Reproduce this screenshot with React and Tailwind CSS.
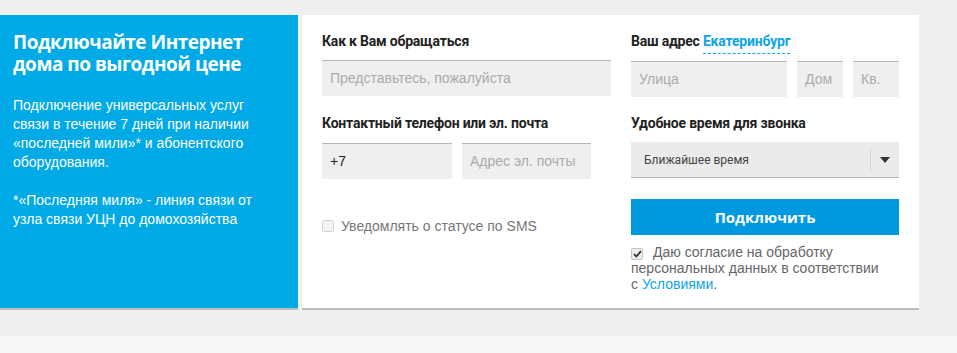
import React from "react";

const label = "text-[14px] font-bold text-[#222] leading-[16px] tracking-[-0.2px]";

export default function App() {
  return (
    <div className="w-[957px] h-[353px] bg-[#efefef] flex flex-col" style={{ fontFamily: '"Liberation Sans", Arial, sans-serif' }}>
      <div className="flex pt-[15px] gap-[4px]">
        {/* Blue panel */}
        <div className="w-[298px] h-[295px] bg-[#00aae6] border-b-2 border-[#bdbdbd] pl-[13px] pt-[16px] text-white">
          <h2 className="text-[19px] font-bold leading-[22px] tracking-[-0.5px]" style={{ fontFamily: '"Open Sans", sans-serif' }}>
            Подключайте Интернет<br />дома по выгодной цене
          </h2>
          <p className="mt-[21px] w-[252px] text-[14px] leading-[19px]">
            Подключение универсальных услуг связи в течение 7 дней при наличии «последней мили»* и абонентского оборудования.
            <br />
            <br />
            *«Последняя миля» - линия связи от узла связи УЦН до домохозяйства
          </p>
        </div>
        {/* White panel */}
        <div className="w-[617px] h-[295px] bg-white border-b-2 border-[#bdbdbd] pl-[20px] pt-[18px] flex gap-[20px]">
          {/* Left column */}
          <div className="w-[289px] flex flex-col">
            <div className={label} style={{ fontFamily: 'Roboto, sans-serif' }}>Как к Вам обращаться</div>
            <div className="mt-[11px] h-[36px] bg-[#efefef] border-t border-[#b5b5b5] flex items-center pl-[8px] text-[14px] text-[#aaaaaa]">
              Представьтесь, пожалуйста
            </div>
            <div className={label + " mt-[19px]"} style={{ fontFamily: 'Roboto, sans-serif' }}>Контактный телефон или эл. почта</div>
            <div className="mt-[12px] flex gap-[10px]">
              <div className="w-[130px] h-[36px] bg-[#efefef] border-t border-[#b5b5b5] flex items-center pl-[8px] text-[14px] text-[#222]">+7</div>
              <div className="w-[129px] h-[36px] bg-[#efefef] border-t border-[#b5b5b5] flex items-center pl-[8px] text-[14px] text-[#aaaaaa]">Адрес эл. почты</div>
            </div>
            <div className="mt-[39px] flex items-center gap-[7px] text-[14px] leading-[16px] text-[#777777]">
              <span className="w-[12px] h-[12px] rounded-[2px] border border-[#d6d6d6] bg-[#f4f4f4]" />
              <span>Уведомлять о статусе по SMS</span>
            </div>
          </div>
          {/* Right column */}
          <div className="w-[268px] flex flex-col">
            <div className={label + " flex"} style={{ fontFamily: 'Roboto, sans-serif' }}>
              <span>Ваш адрес&nbsp;</span>
              <span className="text-[#0ea5e2] border-b border-dashed border-[#0ea5e2] pb-[4px]">Екатеринбург</span>
            </div>
            <div className="mt-[7px] flex gap-[10px]">
              <div className="w-[156px] h-[36px] bg-[#efefef] border-t border-[#b5b5b5] flex items-center pl-[8px] text-[14px] text-[#aaaaaa]">Улица</div>
              <div className="w-[46px] h-[36px] bg-[#efefef] border-t border-[#b5b5b5] flex items-center pl-[8px] text-[14px] text-[#aaaaaa]">Дом</div>
              <div className="w-[46px] h-[36px] bg-[#efefef] border-t border-[#b5b5b5] flex items-center pl-[8px] text-[14px] text-[#aaaaaa]">Кв.</div>
            </div>
            <div className={label + " mt-[18px]"} style={{ fontFamily: 'Roboto, sans-serif' }}>Удобное время для звонка</div>
            <div className="mt-[11px] h-[36px] bg-[#ebebeb] border-b border-[#b5b5b5] flex items-center text-[12px] text-[#444]" style={{ fontFamily: 'Roboto, sans-serif' }}>
              <span className="pl-[13px] flex-1">Ближайшее время</span>
              <span className="w-px h-[24px] bg-[#d4d4d4]" />
              <span className="w-[28px] flex justify-center">
                <svg width="10" height="6" viewBox="0 0 10 6"><path d="M0 0h10L5 6z" fill="#333" /></svg>
              </span>
            </div>
            <button className="mt-[21px] h-[36px] bg-[#0099e0] text-white text-[15px] font-bold flex items-center justify-center" style={{ fontFamily: '"Open Sans", sans-serif' }}>
              Подключить
            </button>
            <div className="mt-[9px] w-[256px] text-[14px] leading-[16px] text-[#666666]">
              <span className="inline-flex align-[-1px] w-[12px] h-[12px] rounded-[2px] border border-[#c4c4c4] bg-[#ececec] items-center justify-center mr-[10px]">
                <svg width="9" height="8" viewBox="0 0 9 8"><path d="M1 4.2l2.3 2.3L8 1.2" stroke="#333" strokeWidth="1.8" fill="none" /></svg>
              </span>
              Даю согласие на обработку персональных данных в соответствии с <span className="text-[#0ea5e2]">Условиями</span>.
            </div>
          </div>
        </div>
      </div>
      <div className="mt-auto h-[17px] bg-[#f6f6f6]" />
    </div>
  );
}
